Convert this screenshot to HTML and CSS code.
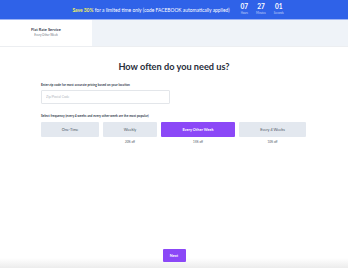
FILE: index.html
```html
<!DOCTYPE html>
<html lang="en">
<head>
<meta charset="utf-8">
<title>How often do you need us?</title>
<link rel="stylesheet" href="styles.css">
</head>
<body>
	<div class="promo">
		<p class="promo-text"><span class="promo-hl">Save 30%</span> for a limited time only (code FACEBOOK automatically applied)</p>
		<div class="timer">
			<div class="timer-unit"><b>07</b><span>Hours</span></div>
			<div class="timer-unit"><b>27</b><span>Minutes</span></div>
			<div class="timer-unit"><b>01</b><span>Seconds</span></div>
		</div>
	</div>
	<div class="summary">
		<div class="summary-card">
			<p class="summary-title">Flat Rate Service</p>
			<p class="summary-sub">Every Other Week</p>
		</div>
		<div class="summary-rest"></div>
	</div>
	<div class="main">
		<h1>How often do you need us?</h1>
		<div class="form">
			<label class="field-label" for="zip">Enter zip code for most accurate pricing based on your location</label>
			<input class="zip" id="zip" type="text" placeholder="Zip/Postal Code">
			<p class="field-label freq-label">Select frequency (every 4 weeks and every other week are the most popular)</p>
			<div class="freq">
				<div class="freq-item">
					<button class="freq-btn">One-Time</button>
				</div>
				<div class="freq-item">
					<button class="freq-btn">Weekly</button>
					<span class="freq-off">20% off</span>
				</div>
				<div class="freq-item">
					<button class="freq-btn active">Every Other Week</button>
					<span class="freq-off">15% off</span>
				</div>
				<div class="freq-item">
					<button class="freq-btn">Every 4 Weeks</button>
					<span class="freq-off">10% off</span>
				</div>
			</div>
		</div>
	</div>
	<div class="footer">
		<button class="next">Next</button>
	</div>
</body>
</html>
```

FILE: styles.css
```css
* {
	margin: 0;
	padding: 0;
	box-sizing: border-box;
}

body {
	font-family: Lato, "Liberation Sans", sans-serif;
	color: #1f2937;
	background: #fff;
	width: 348px;
	height: 268px;
	display: flex;
	flex-direction: column;
	overflow: hidden;
}

.promo {
	height: 20px;
	background: #2f62e8;
	color: #fff;
	display: flex;
	align-items: center;
	justify-content: center;
	gap: 11px;
	padding-left: 8px;
	border-bottom: 1px solid #9db4f5;
}

.promo-text {
	font-size: 4.9px;
}

.promo-hl {
	color: #f5f55a;
	font-weight: bold;
}

.timer {
	display: flex;
	gap: 8px;
}

.timer-unit {
	display: flex;
	flex-direction: column;
	align-items: center;
	line-height: 1;
}

.timer-unit b {
	font-size: 6.5px;
}

.timer-unit span {
	font-size: 2.7px;
	color: #c7d5fb;
	margin-top: 1px;
}

.summary {
	height: 27px;
	display: flex;
	border-bottom: 1px solid #eceef1;
}

.summary-card {
	width: 92px;
	background: #fff;
	display: flex;
	flex-direction: column;
	align-items: center;
	justify-content: center;
	padding-bottom: 2px;
}

.summary-title {
	font-size: 4px;
	font-weight: bold;
	color: #374151;
}

.summary-sub {
	font-size: 2.9px;
	color: #6b7280;
	margin-top: 1px;
}

.summary-rest {
	flex: 1;
	background: #eff3f8;
}

.main {
	flex: 1;
}

h1 {
	font-size: 9.2px;
	text-align: center;
	margin-top: 14px;
	color: #272d3a;
}

.form {
	margin: 11px 0 0 41px;
	width: 266px;
}

.field-label {
	display: block;
	font-size: 3.2px;
	color: #374151;
	font-weight: bold;
}

.zip {
	display: block;
	width: 129px;
	height: 14px;
	margin-top: 3px;
	border: 1px solid #e3e6ea;
	border-radius: 1px;
	font-family: inherit;
	font-size: 3.3px;
	padding-left: 4px;
	color: #374151;
}

.zip::placeholder {
	color: #b3b8c0;
}

.freq-label {
	margin-top: 10px;
}

.freq {
	display: flex;
	gap: 4px;
	margin-top: 4px;
}

.freq-item {
	display: flex;
	flex-direction: column;
	align-items: center;
}

.freq-item:nth-child(1) { width: 58px; }
.freq-item:nth-child(2) { width: 54px; }
.freq-item:nth-child(3) { width: 74px; }
.freq-item:nth-child(4) { width: 67px; }

.freq-btn {
	width: 100%;
	height: 15px;
	border: none;
	border-radius: 1px;
	background: #e3e8ef;
	color: #4b5563;
	font-family: inherit;
	font-size: 3.8px;
}

.freq-btn.active {
	background: #8b48f7;
	color: #fff;
	font-weight: bold;
}

.freq-off {
	font-size: 2.9px;
	color: #4b5563;
	margin-top: 3px;
}

.footer {
	height: 24px;
	display: flex;
	justify-content: center;
	padding-top: 5px;
	background: linear-gradient(to bottom, #fff 0, #fff 14px, #ececec 24px);
}

.next {
	width: 23px;
	height: 13px;
	border: none;
	border-radius: 1px;
	background: #8b48f7;
	color: #fff;
	font-family: inherit;
	font-weight: bold;
	font-size: 3.8px;
}
```
